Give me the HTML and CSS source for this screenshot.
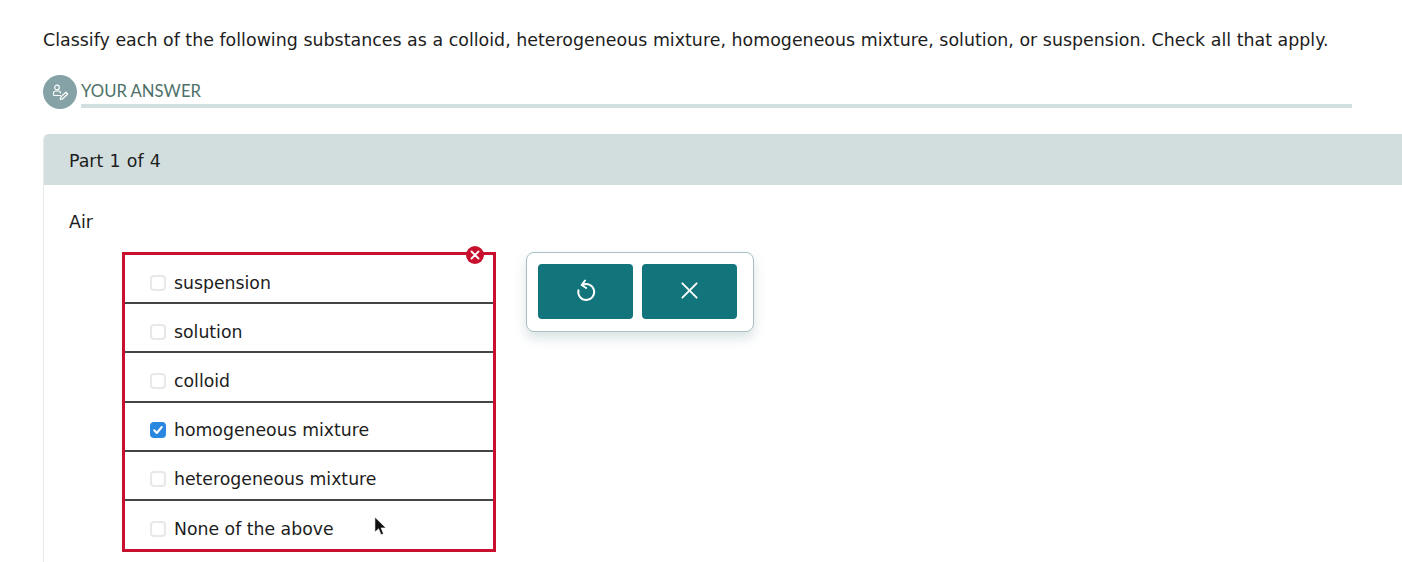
FILE: index.html
```html
<!DOCTYPE html>
<html lang="en">
<head>
    <meta charset="UTF-8">
    <meta name="viewport" content="width=device-width, initial-scale=1.0">
    <title>Classify substances</title>
    <link rel="stylesheet" href="styles.css">
</head>
<body>
    <p class="question">Classify each of the following substances as a colloid, heterogeneous mixture, homogeneous mixture, solution, or suspension. Check all that apply.</p>

    <div class="answer-head">
        <div class="answer-icon">
            <svg width="20" height="20" viewBox="0 0 20 20" fill="none" stroke="#fff" stroke-width="1.2" stroke-linecap="round" stroke-linejoin="round">
                <circle cx="7" cy="5.500" r="2.300"/>
                <path d="M10.500 13.500H4.500a1 1 0 0 1-1-1V11a2 2 0 0 1 2-2h3a2 2 0 0 1 2 2"/>
                <path d="M10.300 17.500l.6-2.600 5-4.700 1.800 1.800-5 4.800z"/>
            </svg>
        </div>
        <div class="answer-title">YOUR ANSWER</div>
    </div>

    <div class="part-card">
        <div class="part-head">Part 1 of 4</div>
        <div class="part-body">
            <div class="part-name">Air</div>
            <div class="work-row">
                <div class="choices">
                    <span class="error-badge">
                        <svg width="10" height="10" viewBox="0 0 10 10" stroke="#fff" stroke-width="1.8" stroke-linecap="round">
                            <path d="M1.500 1.500l7 7M8.500 1.500l-7 7"/>
                        </svg>
                    </span>
                    <label class="choice"><span class="box"></span>suspension</label>
                    <label class="choice"><span class="box"></span>solution</label>
                    <label class="choice"><span class="box"></span>colloid</label>
                    <label class="choice">
                        <span class="box checked">
                            <svg width="12" height="12" viewBox="0 0 12 12" fill="none" stroke="#fff" stroke-width="2" stroke-linecap="round" stroke-linejoin="round">
                                <path d="M2.200 6.300l2.600 2.700 5-6"/>
                            </svg>
                        </span>homogeneous mixture
                    </label>
                    <label class="choice"><span class="box"></span>heterogeneous mixture</label>
                    <label class="choice"><span class="box"></span>None of the above</label>
                    <svg class="pointer" width="13" height="21" viewBox="0 0 14 22">
                        <path d="M1 1v16l4-3.600 2.600 6.400 2.600-1.100-2.600-6.200h5.200z" fill="#111" stroke="#fff" stroke-width="0.6"/>
                    </svg>
                </div>
                <div class="tools">
                    <button class="tool-btn" aria-label="Undo">
                        <svg width="23" height="25" viewBox="0 0 20 22" fill="none" stroke="#fff" stroke-width="1.700" stroke-linecap="round" stroke-linejoin="round">
                            <path d="M7.200 6.200a7 7 0 1 1-3.400 4.600"/>
                            <path d="M9.600 2.200L6.600 6.200l4 2.600"/>
                        </svg>
                    </button>
                    <button class="tool-btn" aria-label="Clear">
                        <svg width="19" height="19" viewBox="0 0 20 20" fill="none" stroke="#fff" stroke-width="2" stroke-linecap="round">
                            <path d="M2.500 2.500l15 15M17.500 2.500l-15 15"/>
                        </svg>
                    </button>
                </div>
            </div>
        </div>
    </div>
</body>
</html>
```

FILE: styles.css
```css
html, body {
    height: 100%;
}

body {
    margin: 0;
    padding: 29px 0 0 43px;
    box-sizing: border-box;
    overflow: hidden;
    background-color: #fff;
    color: #1d1d1d;
    font-family: "DejaVu Sans", Verdana, sans-serif;
    font-size: 17.4px;
}

.question {
    margin: 0;
    line-height: 22px;
    letter-spacing: 0.02px;
    white-space: nowrap;
}

.answer-head {
    display: flex;
    align-items: flex-start;
    gap: 4px;
    margin-top: 24px;
    margin-right: 50px;
}

.answer-icon {
    width: 34px;
    height: 34px;
    flex: none;
    display: flex;
    align-items: center;
    justify-content: center;
    border-radius: 50%;
    background-color: #85a2a6;
}

.answer-title {
    flex: 1;
    height: 33px;
    box-sizing: border-box;
    border-bottom: 4px solid #d2e0df;
    color: #4d7068;
    font-family: Lato, "Open Sans", sans-serif;
    font-size: 16.700px;
    line-height: 32px;
}

.part-card {
    margin-top: 25px;
    border-left: 1px solid #e2e9e9;
    border-radius: 5px 0 0 0;
}

.part-head {
    height: 51px;
    padding-left: 25px;
    background-color: #d2dddd;
    border-radius: 5px 0 0 0;
    line-height: 54px;
    word-spacing: 0.7px;
}

.part-body {
    padding: 26px 0 10px 25px;
}

.part-name {
    line-height: 22px;
}

.work-row {
    display: flex;
    align-items: flex-start;
    gap: 30px;
    margin-top: 19px;
    margin-left: 53px;
}

.choices {
    position: relative;
    width: 374px;
    height: 300px;
    box-sizing: border-box;
    border: 3px solid #c8102e;
    display: flex;
    flex-direction: column;
    font-size: 17.3px;
}

.choice {
    flex: 1;
    display: flex;
    align-items: center;
    gap: 8px;
    padding: 8px 0 0 25px;
    border-bottom: 2px solid #444;
}

.choice:last-of-type {
    padding-top: 9px;
    border-bottom: none;
}

.box {
    width: 16px;
    height: 16px;
    flex: none;
    display: flex;
    align-items: center;
    justify-content: center;
    box-sizing: border-box;
    border: 2px solid #e8e8e8;
    border-radius: 4px;
    background-color: #fff;
}

.box.checked {
    border-color: #2a87e0;
    background-color: #2a87e0;
}

.error-badge {
    position: absolute;
    top: -9px;
    right: 9px;
    width: 18px;
    height: 18px;
    display: flex;
    align-items: center;
    justify-content: center;
    border-radius: 50%;
    background-color: #c8102e;
}

.pointer {
    position: absolute;
    left: 249px;
    top: 261px;
}

.tools {
    display: flex;
    gap: 9px;
    padding: 11px 16px 12px 11px;
    border: 1.5px solid #a9c0c3;
    border-radius: 8px;
    background-color: #fff;
    box-shadow: 0 6px 12px rgba(120, 150, 155, 0.28);
}

.tool-btn {
    width: 95px;
    height: 55px;
    padding: 0 0 3px;
    display: flex;
    align-items: center;
    justify-content: center;
    border: none;
    border-radius: 4px;
    background-color: #12757c;
}
```
